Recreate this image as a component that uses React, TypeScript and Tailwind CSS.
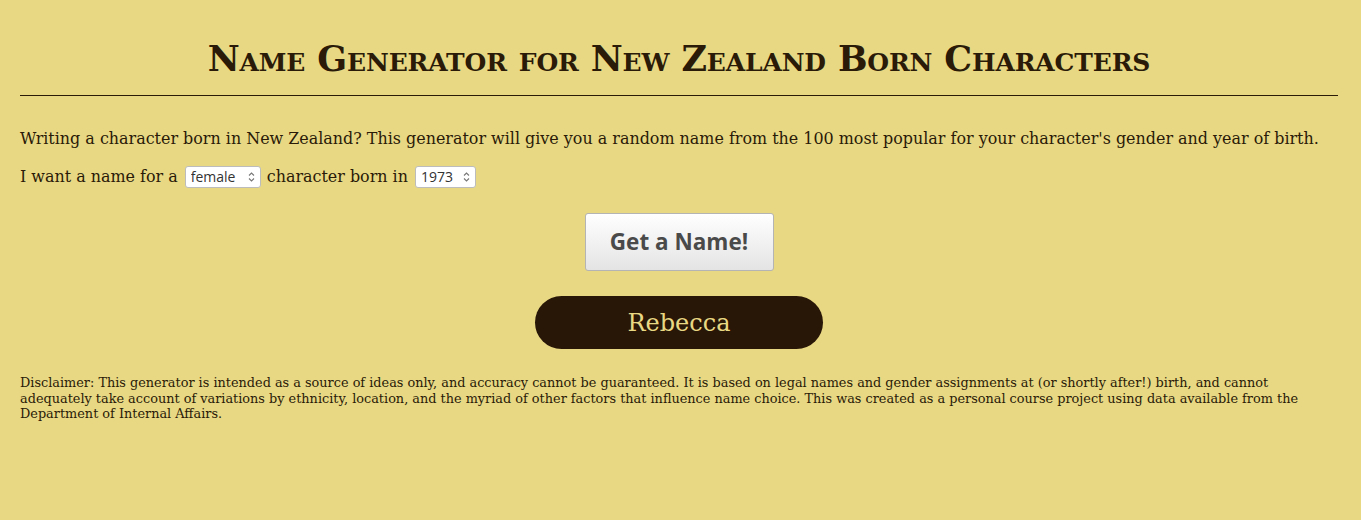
import React from "react";

function Arrows() {
  return (
    <svg width="7" height="11" viewBox="0 0 7 11" className="absolute right-[6px] top-1/2 -translate-y-1/2 pointer-events-none">
      <path d="M1 4 L3.5 1.5 L6 4" fill="none" stroke="#777" strokeWidth="1.1" />
      <path d="M1 7 L3.5 9.5 L6 7" fill="none" stroke="#777" strokeWidth="1.1" />
    </svg>
  );
}

function Sel({ value, width }: { value: string; width: string }) {
  return (
    <span className={`relative inline-block align-middle ${width}`}>
      <select
        defaultValue={value}
        className="appearance-none w-full h-[22px] bg-white border border-[#bcbcbc] rounded-[3px] pl-[5px] pr-[14px] text-[14px] text-[#333] leading-[20px] [font-family:'Open_Sans',sans-serif]"
      >
        <option>{value}</option>
      </select>
      <Arrows />
    </span>
  );
}

export default function App() {
  return (
    <div className="min-h-[520px] bg-[#e8d883] pl-[20px] pr-[23px] text-[#2a1a08] [font-family:'DejaVu_Serif',serif]">
      <h1 className="pt-[38px] pb-[16px] text-center text-[35px] leading-[41px] tracking-[-0.15px] font-bold [font-variant:small-caps] border-b border-[#2a1a08]">
        Name Generator for New Zealand Born Characters
      </h1>
      <p className="mt-[33px] text-[15.93px] leading-[20px]">
        Writing a character born in New Zealand? This generator will give you a random name from the 100 most popular for your character's gender and year of birth.
      </p>
      <p className="mt-[16px] text-[15.93px] leading-[24px] flex items-center">
        <span>I want a name for a</span>
        <span className="ml-[7px] mr-[6px] inline-flex"><Sel value="female" width="w-[76px]" /></span>
        <span>character born in</span>
        <span className="ml-[7px] inline-flex"><Sel value="1973" width="w-[61px]" /></span>
      </p>
      <div className="flex justify-center mt-[24px]">
        <button className="w-[189px] h-[58px] rounded-[3px] border border-[#b4b4b4] bg-gradient-to-b from-[#ffffff] to-[#e4e4e4] text-[#4a4a4a] text-[22.5px] font-bold [font-family:'Open_Sans',sans-serif] shadow-[inset_0_1px_0_#fff]">
          Get a Name!
        </button>
      </div>
      <div className="flex justify-center mt-[25px]">
        <div className="w-[288px] h-[53px] rounded-full bg-[#281607] text-[#e8d883] text-[24px] flex items-center justify-center">
          Rebecca
        </div>
      </div>
      <p className="mt-[26px] text-[12.85px] leading-[15.5px]">
        Disclaimer: This generator is intended as a source of ideas only, and accuracy cannot be guaranteed. It is based on legal names and gender assignments at (or shortly after!) birth, and cannot adequately take account of variations by ethnicity, location, and the myriad of other factors that influence name choice. This was created as a personal course project using data available from the Department of Internal Affairs.
      </p>
    </div>
  );
}
